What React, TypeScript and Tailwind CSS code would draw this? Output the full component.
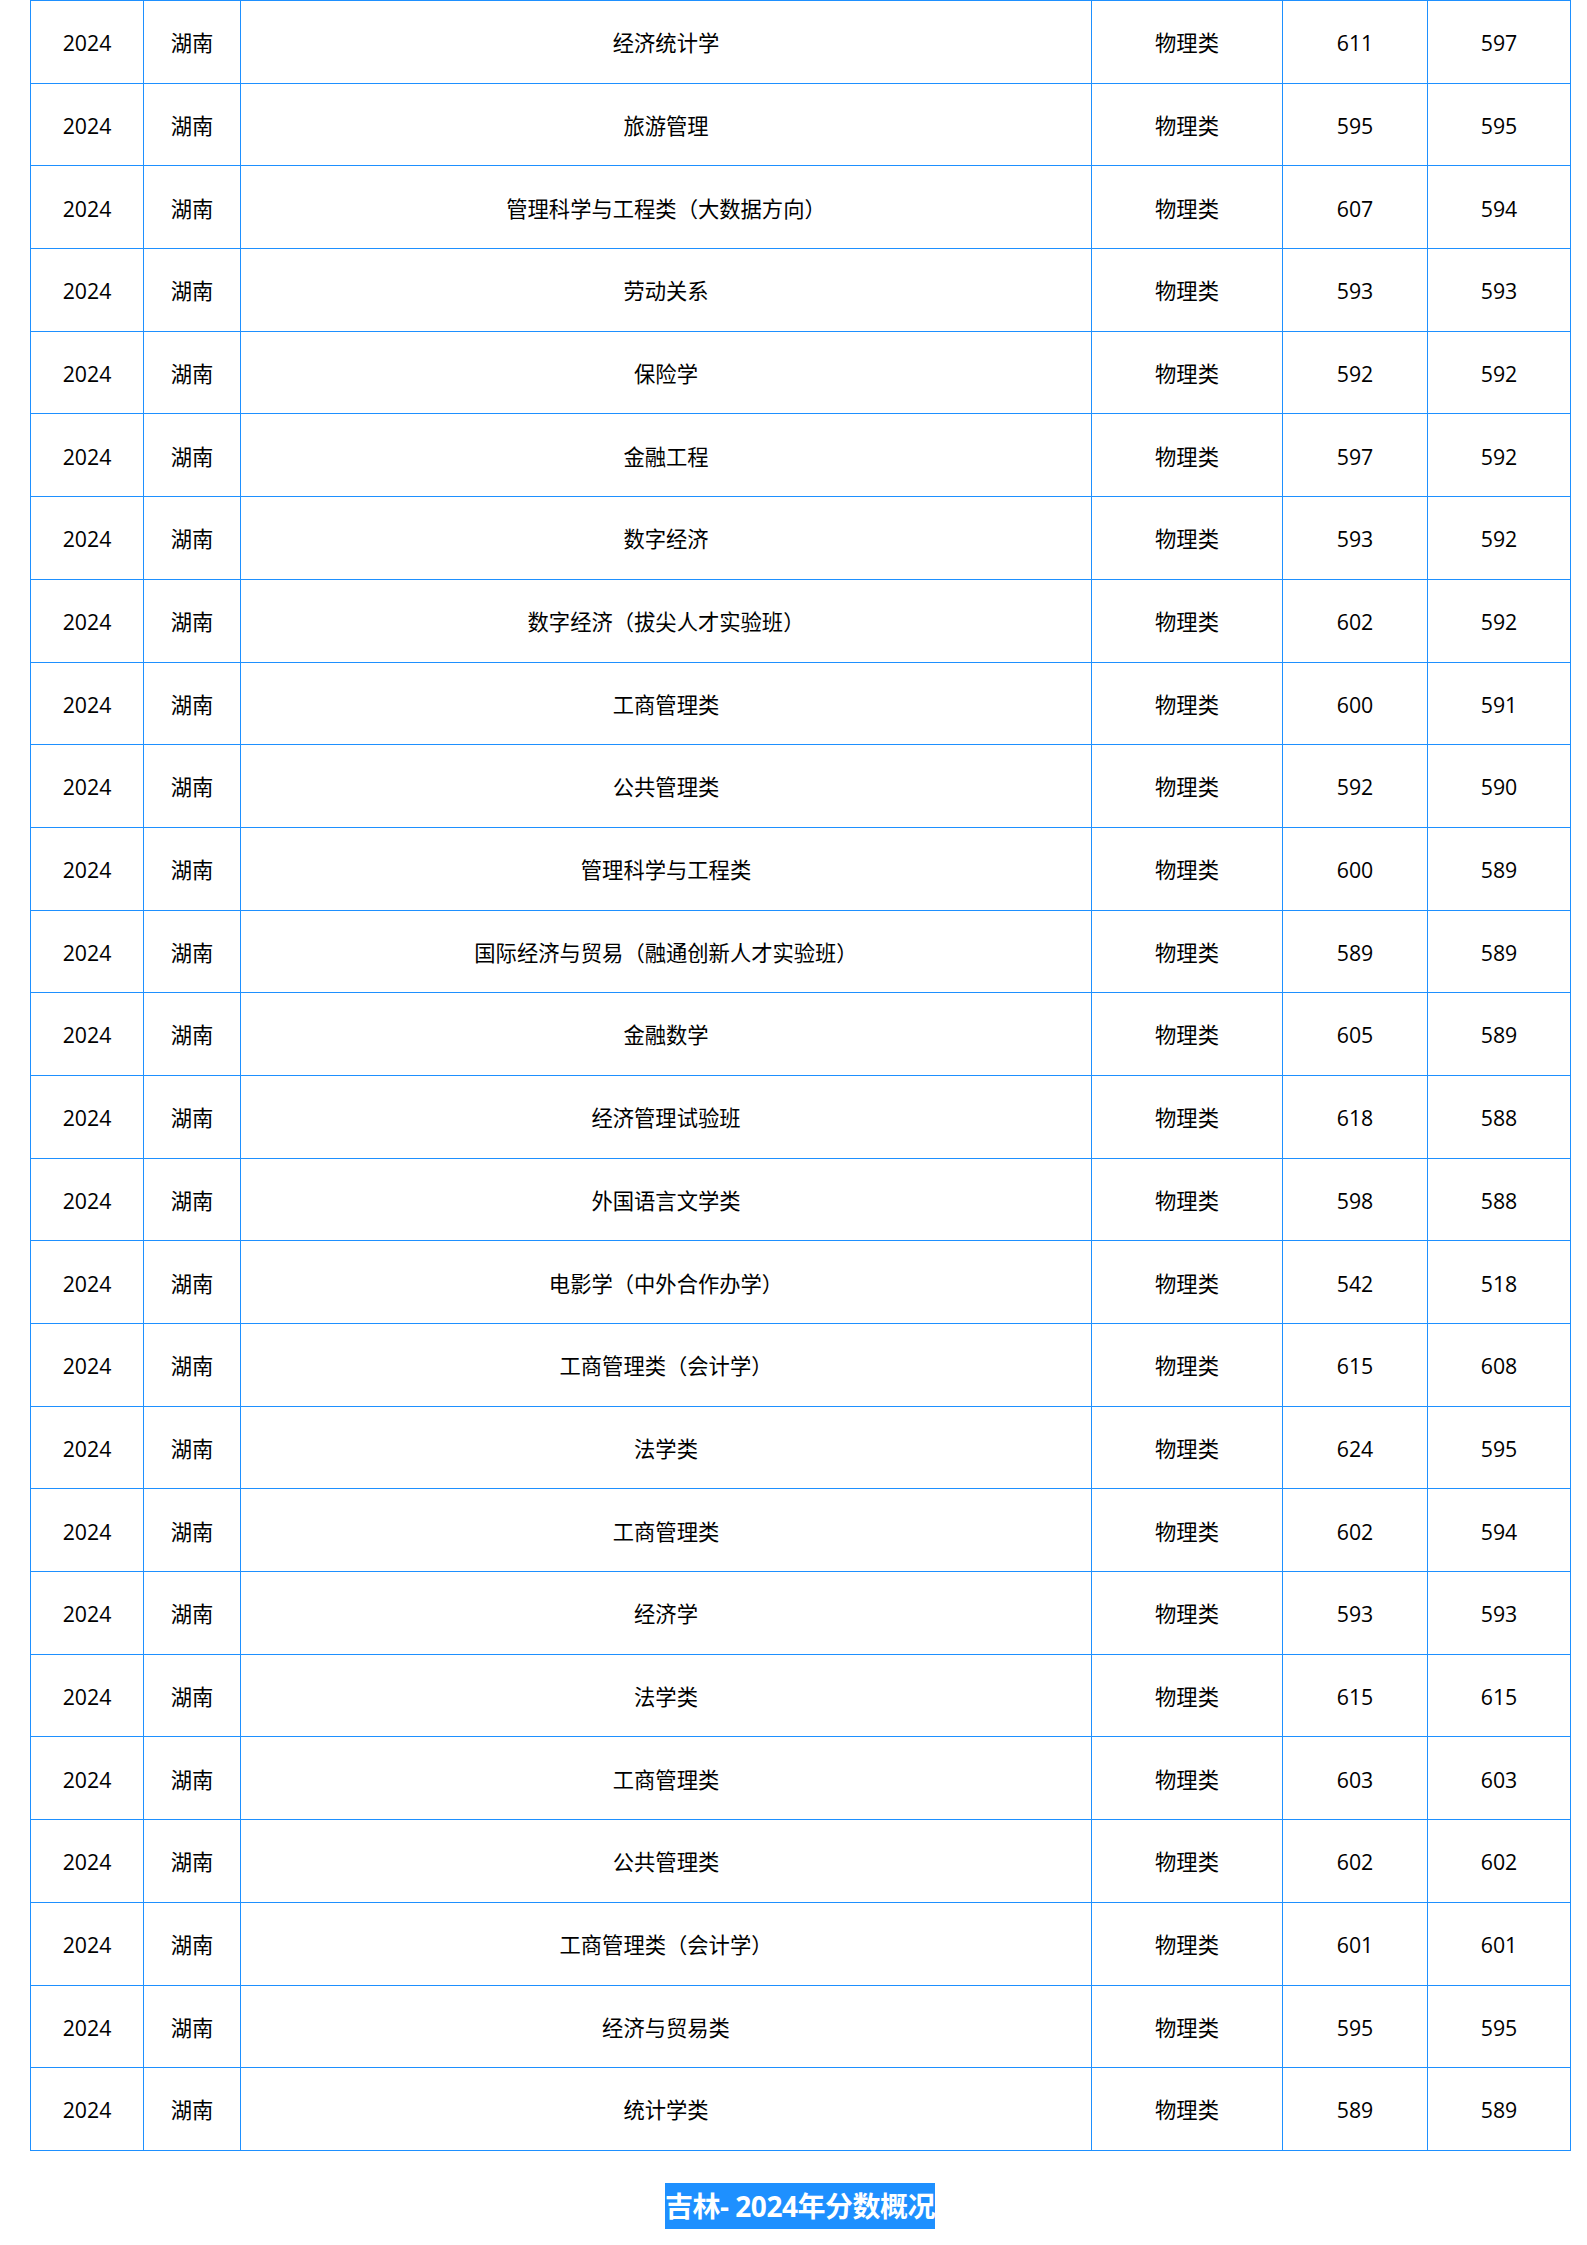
import React from "react";

const rows: [string, number, number][] = [
  ["经济统计学", 611, 597],
  ["旅游管理", 595, 595],
  ["管理科学与工程类（大数据方向）", 607, 594],
  ["劳动关系", 593, 593],
  ["保险学", 592, 592],
  ["金融工程", 597, 592],
  ["数字经济", 593, 592],
  ["数字经济（拔尖人才实验班）", 602, 592],
  ["工商管理类", 600, 591],
  ["公共管理类", 592, 590],
  ["管理科学与工程类", 600, 589],
  ["国际经济与贸易（融通创新人才实验班）", 589, 589],
  ["金融数学", 605, 589],
  ["经济管理试验班", 618, 588],
  ["外国语言文学类", 598, 588],
  ["电影学（中外合作办学）", 542, 518],
  ["工商管理类（会计学）", 615, 608],
  ["法学类", 624, 595],
  ["工商管理类", 602, 594],
  ["经济学", 593, 593],
  ["法学类", 615, 615],
  ["工商管理类", 603, 603],
  ["公共管理类", 602, 602],
  ["工商管理类（会计学）", 601, 601],
  ["经济与贸易类", 595, 595],
  ["统计学类", 589, 589],
];

export default function App() {
  const cell = "border border-[#1e90ff] text-center align-middle p-0 pt-[2px]";
  return (
    <div
      className="w-[1587px] min-h-[2245px] bg-white text-black pl-[30px] pr-[17px]"
      style={{ fontFamily: '"Open Sans", "Noto Sans CJK SC", sans-serif' }}
    >
      <table className="w-full border-collapse table-fixed text-[21.3px] leading-none">
        <colgroup>
          <col className="w-[113px]" />
          <col className="w-[97px]" />
          <col className="w-[851px]" />
          <col className="w-[191px]" />
          <col className="w-[145px]" />
          <col className="w-[143px]" />
        </colgroup>
        <tbody>
          {rows.map(([name, a, b], i) => (
            <tr key={i} className="h-[82.7px]">
              <td className={cell}>2024</td>
              <td className={cell}>湖南</td>
              <td className={cell}>{name}</td>
              <td className={cell}>物理类</td>
              <td className={cell}>{a}</td>
              <td className={cell}>{b}</td>
            </tr>
          ))}
        </tbody>
      </table>
      <div className="flex justify-center pt-[32px]">
        <span
          className="inline-flex items-center h-[46px] bg-[#1e90ff] text-white font-bold text-[28px] leading-none tracking-[-0.5px]"
          style={{ fontFamily: '"Open Sans", "Noto Sans CJK SC", sans-serif' }}
        >
          吉林- 2024年分数概况
        </span>
      </div>
    </div>
  );
}
